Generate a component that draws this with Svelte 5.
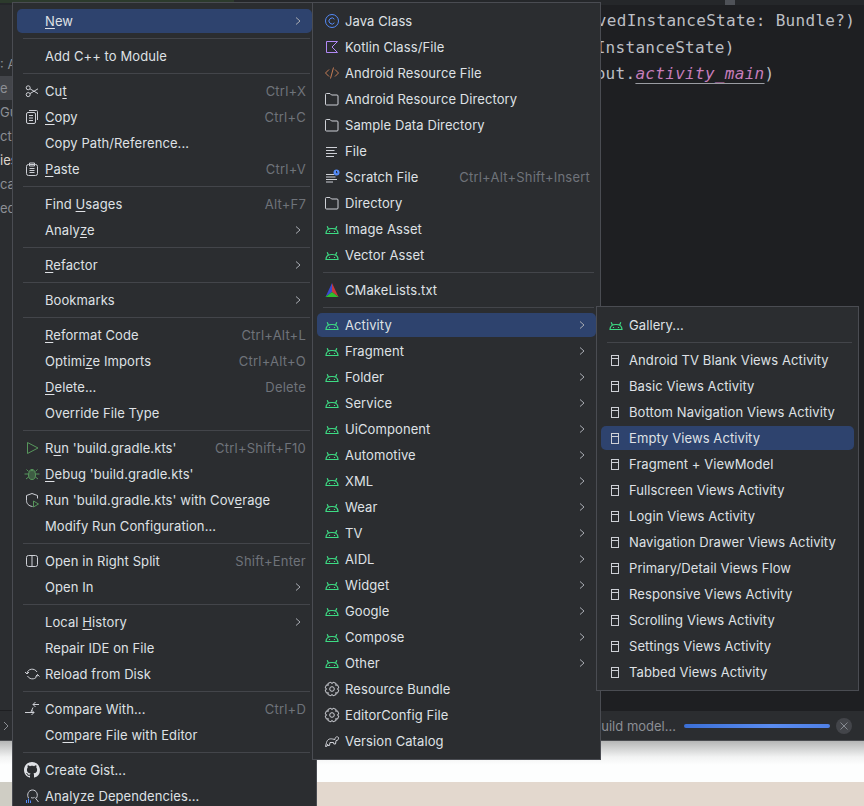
<script>
  const gear = (() => {
    let d = '';
    for (let i = 0; i < 8; i++) {
      const a = (i * Math.PI) / 4 + Math.PI / 8;
      const pts = [[-0.24, 6.9], [0.24, 6.9], [0.42, 5.3]];
      const pt = (o, r) => `${(8 + r * Math.sin(a + o)).toFixed(2)} ${(8 - r * Math.cos(a + o)).toFixed(2)}`;
      d += (i ? 'L' : 'M') + pt(-0.42, 5.3) + 'L' + pts.map((p) => pt(p[0], p[1])).join('L');
    }
    return d + 'Z';
  })();

  const S = { sep: true };
  const main = [
    { t: 'New', u: 0, sub: true, on: true }, S,
    { t: 'Add C++ to Module' }, S,
    { t: 'Cut', u: 2, i: 'cut', k: 'Ctrl+X' },
    { t: 'Copy', u: 0, i: 'copy', k: 'Ctrl+C' },
    { t: 'Copy Path/Reference...' },
    { t: 'Paste', u: 0, i: 'paste', k: 'Ctrl+V' }, S,
    { t: 'Find Usages', u: 5, k: 'Alt+F7' },
    { t: 'Analyze', u: 5, sub: true }, S,
    { t: 'Refactor', u: 0, sub: true }, S,
    { t: 'Bookmarks', sub: true }, S,
    { t: 'Reformat Code', u: 0, k: 'Ctrl+Alt+L' },
    { t: 'Optimize Imports', u: 6, k: 'Ctrl+Alt+O' },
    { t: 'Delete...', u: 0, k: 'Delete' },
    { t: 'Override File Type' }, S,
    { t: "Run 'build.gradle.kts'", u: 1, i: 'run', k: 'Ctrl+Shift+F10' },
    { t: "Debug 'build.gradle.kts'", u: 0, i: 'debug' },
    { t: "Run 'build.gradle.kts' with Coverage", u: 31, i: 'coverage' },
    { t: 'Modify Run Configuration...' }, S,
    { t: 'Open in Right Split', i: 'split', k: 'Shift+Enter' },
    { t: 'Open In', sub: true }, S,
    { t: 'Local History', u: 6, sub: true },
    { t: 'Repair IDE on File' },
    { t: 'Reload from Disk', i: 'reload' }, S,
    { t: 'Compare With...', i: 'compare', k: 'Ctrl+D' },
    { t: 'Compare File with Editor', u: 2 }, S,
    { t: 'Create Gist...', i: 'github' },
    { t: 'Analyze Dependencies...', i: 'deps' },
  ];

  const a = 'android';
  const create = [
    { t: 'Java Class', i: 'java' },
    { t: 'Kotlin Class/File', i: 'kotlin' },
    { t: 'Android Resource File', i: 'xml' },
    { t: 'Android Resource Directory', i: 'folder' },
    { t: 'Sample Data Directory', i: 'folder' },
    { t: 'File', i: 'file' },
    { t: 'Scratch File', i: 'scratch', k: 'Ctrl+Alt+Shift+Insert' },
    { t: 'Directory', i: 'folder' },
    { t: 'Image Asset', i: a },
    { t: 'Vector Asset', i: a }, S,
    { t: 'CMakeLists.txt', i: 'cmake' }, S,
    { t: 'Activity', i: a, sub: true, on: true },
    ...['Fragment', 'Folder', 'Service', 'UiComponent', 'Automotive', 'XML', 'Wear', 'TV', 'AIDL', 'Widget', 'Google', 'Compose', 'Other'].map((t) => ({ t, i: a, sub: true })),
    { t: 'Resource Bundle', i: 'gear' },
    { t: 'EditorConfig File', i: 'gear' },
    { t: 'Version Catalog', i: 'gradle' },
  ];

  const activities = [
    { t: 'Gallery...', i: a }, S,
    ...[
      'Android TV Blank Views Activity', 'Basic Views Activity', 'Bottom Navigation Views Activity',
      'Empty Views Activity', 'Fragment + ViewModel', 'Fullscreen Views Activity', 'Login Views Activity',
      'Navigation Drawer Views Activity', 'Primary/Detail Views Flow', 'Responsive Views Activity',
      'Scrolling Views Activity', 'Settings Views Activity', 'Tabbed Views Activity',
    ].map((t) => ({ t, i: 'screen', on: t.startsWith('Empty') })),
  ];

  const side = [': A', 'e ::', 'Gu', 'ct', 'ies', 'ca', 'ed'];
</script>

{#snippet icon(n)}
  <svg class="ic" viewBox="0 0 16 16" fill="none" stroke="#ced0d6">
    {#if n === 'cut'}
      <circle cx="4.2" cy="4.8" r="2" /><circle cx="4.2" cy="11.6" r="2" /><path d="M6 5.8l8 4.8M6 10.6l8-4.8" />
    {:else if n === 'copy'}
      <rect x="2.5" y="3.5" width="9" height="11" rx="1.5" /><path d="M5 1.5h7.5a1 1 0 0 1 1 1V11M5 6.5h4M5 9h4M5 11.5h4" />
    {:else if n === 'paste'}
      <rect x="2.5" y="3.5" width="11" height="11" rx="2" /><path d="M5.5 2h5v3h-5zM5.5 7.5h5M5.5 9.5h5M5.5 11.5h5" />
    {:else if n === 'run'}
      <path d="M3.5 2.5L14 8 3.5 13.5z" stroke="#57965c" />
    {:else if n === 'debug'}
      <g stroke="#57965c"><ellipse cx="8" cy="9" rx="3.5" ry="4.5" fill="#57965c" fill-opacity=".45" /><path d="M5.5 4.8C6 3 10 3 10.5 4.8M4.5 8H.5M11.500 8h4M4.600 11l-2.600 2M11.400 11l2.600 2M4.600 5.500L2.500 3.500M11.400 5.500l2.100-2" /></g>
    {:else if n === 'coverage'}
      <path d="M8.500 14.500C5 14 2.500 12 2.500 8.500V3.500L8 1.500l5.500 2v3" /><path d="M9.500 9l5 3-5 3z" stroke="#57965c" />
    {:else if n === 'split'}
      <rect x="2.500" y="2.500" width="11" height="11" rx="2" /><path d="M8 2.500v11" />
    {:else if n === 'reload'}
      <path d="M3 7.500C3.600 2.500 10.500 1.600 13 6M13.500 8.500C13 13.500 6 14.500 3.500 10M1 6l2 2 2-2M11.500 10.500l2-2 2 2" />
    {:else if n === 'compare'}
      <path d="M9 6.500L7 11M1 11.500h9M7.500 9l2.500 2.500L7.500 14M15 3.500H9M11.500 1L9 3.500 11.500 6" />
    {:else if n === 'github'}
      <path stroke="none" fill="#dfe1e5" d="M8 0C3.58 0 0 3.58 0 8c0 3.54 2.29 6.53 5.47 7.59.4.07.55-.17.55-.38 0-.19-.01-.82-.01-1.49-2.01.37-2.53-.49-2.69-.94-.09-.23-.48-.94-.82-1.13-.28-.15-.68-.52-.01-.53.63-.01 1.08.58 1.23.82.72 1.21 1.87.87 2.33.66.07-.52.28-.87.51-1.07-1.78-.2-3.64-.89-3.64-3.95 0-.87.31-1.59.82-2.15-.08-.2-.36-1.02.08-2.12 0 0 .67-.21 2.2.82.64-.18 1.32-.27 2-.27s1.36.09 2 .27c1.53-1.04 2.2-.82 2.2-.82.44 1.1.16 1.92.08 2.12.51.56.82 1.27.82 2.15 0 3.07-1.87 3.75-3.65 3.95.29.25.54.73.54 1.48 0 1.07-.01 1.93-.01 2.2 0 .21.15.46.55.38A8.013 8.013 0 0016 8c0-4.42-3.58-8-8-8z" />
    {:else if n === 'deps'}
      <path d="M4.500 10C2.500 6.500 4.500 2 8.500 2s6 4.500 4 8M11 9.500l3.500 4.500M7 9.500c1 .6 2.400.6 3.400-.1" /><path d="M2.500 12v3M4.500 10.500V15M6.500 12.500V15" stroke="#548af7" />
    {:else if n === 'java'}
      <circle cx="8" cy="8" r="6.500" stroke="#548af7" /><path d="M10.400 6.200A3 3 0 1 0 10.400 9.800" stroke="#548af7" />
    {:else if n === 'kotlin'}
      <path d="M2.500 2.500h11L8 8l5.500 5.500h-11z" stroke="#b189f5" />
    {:else if n === 'xml'}
      <path d="M5 4.500L1.500 8 5 11.500M11 4.500L14.500 8 11 11.500M9.500 2.500L6.500 13.500" stroke="#c77d55" />
    {:else if n === 'folder'}
      <path d="M2 3.500a1 1 0 0 1 1-1h3.500L8 4h5.500a1 1 0 0 1 1 1v8a1 1 0 0 1-1 1H3a1 1 0 0 1-1-1z" transform="translate(-.5 0)" />
    {:else if n === 'file'}
      <path d="M2 4.500h11M2 7.500h8.500M2 10.500h11M2 13.500h8" />
    {:else if n === 'scratch'}
      <path d="M2 5.500h8M2 8h9.500M2 10.500h11M2 13h7" /><circle cx="12.500" cy="3.500" r="3" fill="#548af7" stroke="none" /><path d="M12.500 2v1.800h1" stroke="#2b2d30" />
    {:else if n === 'android'}
      <path class="droid" d="M2 12.500c0-3 2.300-5 6-5s6 2 6 5zM4.500 8.300L3.200 5.200M11.500 8.300L12.800 5.200M5.500 10v1M10.500 10v1" stroke="#3ddc84" />
    {:else if n === 'cmake'}
      <path stroke="none" fill="#3a4bd0" d="M8 1v9l-6.500 5z" /><path stroke="none" fill="#c8383f" d="M8 1l6.500 14L8 10z" /><path stroke="none" fill="#2fbf2f" d="M1.500 15L8 10l6.500 5z" />
    {:else if n === 'gear'}
      <path d={gear} /><circle cx="8" cy="8" r="2.300" />
    {:else if n === 'gradle'}
      <path d="M1.500 13.500l1-4C3.500 6 6 5.500 8.500 6l2.500.500C11 4 13 3 14.500 4.500c.5 2-1 3-2.500 3.200L11.500 11H9.800l-.3-1.500H6L5.500 12.500H3.500l.2-1.300-1 2.300z" />
    {:else if n === 'screen'}
      <rect x="3.500" y="3.500" width="7" height="10" /><path d="M3.500 6.500h7" />
    {/if}
  </svg>
{/snippet}

{#snippet row(it)}
  {#if it.sep}
    <div class="sep"></div>
  {:else}
    <div class="item" class:on={it.on}>
      {#if it.i}{@render icon(it.i)}{:else}<span class="ic"></span>{/if}
      <span class="label">{#if it.u !== undefined}{it.t.slice(0, it.u)}<u>{it.t[it.u]}</u>{it.t.slice(it.u + 1)}{:else}{it.t}{/if}</span>
      {#if it.k}<span class="key">{it.k}</span>{/if}
      {#if it.sub}
        <svg class="arrow" viewBox="0 0 16 16" fill="none" stroke="#a8abb2"><path d="M6 4.500L10 8 6 11.500" /></svg>
      {/if}
    </div>
  {/if}
{/snippet}

<div class="screen">
  <div class="work">
    <div class="strip">
      <div class="tint"></div>
      <div class="thumb"></div>
    </div>
    <div class="panes">
      <aside class="side">
        {#each side as s, i}
          <div class="side-row" class:sel={i === 1} class:warm={i === 4}>{s}</div>
        {/each}
      </aside>
      <main class="code">
        <div class="line first">savedInstanceState: Bundle?)</div>
        <div class="line">savedInstanceState)</div>
        <div class="line">R.layout.<i>activity_main</i>)</div>
      </main>
    </div>
  </div>
  <footer class="status">
    <svg class="crumb" viewBox="0 0 8 12" fill="none" stroke="#8c8f95"><path d="M2 2l4 4-4 4" /></svg>
    <span class="task">Build model...</span>
    <div class="bar"></div>
    <div class="close"><svg viewBox="0 0 10 10" fill="none" stroke="#868a91"><path d="M1.500 1.500l7 7M8.500 1.500l-7 7" /></svg></div>
  </footer>
  <div class="white"></div>
  <div class="tan"></div>

  <nav class="menu m1">{#each main as it}{@render row(it)}{/each}</nav>
  <nav class="menu m2">{#each create as it}{@render row(it)}{/each}</nav>
  <nav class="menu m3">{#each activities as it}{@render row(it)}{/each}</nav>
</div>

<style>
  :global(body) { margin: 0; background: #1e1f22; }
  .screen {
    position: relative; width: 864px; height: 806px; overflow: hidden;
    display: flex; flex-direction: column;
    font: 13px/16px Inter, "Noto Sans", sans-serif; color: #dfe1e5;
  }
  .work { height: 711px; display: flex; flex-direction: column; background: #1e1f22; }
  .strip { height: 5px; background: #25272a; position: relative; flex: none; }
  .tint { width: 234px; height: 3px; background: #2c3a2c; }
  .thumb { position: absolute; left: 725px; top: 0; width: 10px; height: 5px; background: #4e5157; }
  .panes { flex: 1; display: flex; min-height: 0; }
  .side { width: 12px; flex: none; background: #2b2d30; padding-top: 47px; color: #8c8f95; }
  .side-row { height: 24px; line-height: 24px; white-space: nowrap; }
  .side-row.sel { background: #43454a; }
  .side-row.warm { color: #dfd5cc; }
  .code { flex: 1; padding: 3px 0 0 534px; font: 16px/26.500px "DejaVu Sans Mono", monospace; letter-spacing: .3px; color: #bcbec4; overflow: hidden; }
  .line { white-space: pre; }
  .first { margin-left: 31px; }
  .code i { color: #c77dbb; text-decoration: underline; text-decoration-color: #9a9ca2; text-underline-offset: 4px; text-decoration-thickness: 1px; }

  .status {
    height: 29px; flex: none; display: flex; align-items: center; box-sizing: content-box;
    background: #2b2d30; border-bottom: 1px solid #4a4c50; box-shadow: 0 -1px 0 #1e1f22;
    color: #8c8f95;
  }
  .crumb { width: 8px; height: 12px; margin-left: 2px; margin-right: auto; }
  .task { margin-right: 8px; }
  .bar { width: 146px; height: 4px; border-radius: 2px; background: linear-gradient(90deg, #3b6fd6, #5a8cf0 60%, #4f80e6); margin-right: 6px; }
  .close { width: 16px; height: 16px; border-radius: 50%; background: #43454a; margin-right: 12px; display: flex; align-items: center; justify-content: center; }
  .close svg { width: 10px; height: 10px; }

  .white { height: 41px; flex: none; background: linear-gradient(#b5b6b6 0, #f2f3f3 16px, #fdfefe 24px); }
  .tan { flex: 1; background: linear-gradient(90deg, #cfcdc4 12px, #e3d8ce 12px); }

  .menu {
    position: absolute; box-sizing: border-box; background: #2b2d30; border: 1px solid #4a4c52; padding: 5px 0;
    display: flex; flex-direction: column;
  }
  .m1 { left: 12px; top: 2px; width: 305px; height: 830px; }
  .m2 { left: 312px; top: 2px; width: 289px; }
  .m3 { left: 596px; top: 306px; width: 263px; }

  .item { height: 24px; flex: none; margin: 1px 4px; padding: 0 6px 0 7px; border-radius: 5px; display: flex; align-items: center; white-space: nowrap; letter-spacing: .09px; }
  .item.on { background: #2e436e; }
  .ic { width: 16px; height: 16px; flex: none; margin-right: 5px; }
  .droid { stroke-width: 1.2; }
  .label { flex: none; }
  .label u { text-underline-offset: 2px; text-decoration-thickness: 1px; }
  .key { margin-left: auto; color: #6f737a; letter-spacing: .22px; }
  .arrow { width: 16px; height: 16px; margin-left: auto; flex: none; }
  .sep { height: 1px; flex: none; margin: 4px 6px 4px 10px; background: #43454a; }
</style>
